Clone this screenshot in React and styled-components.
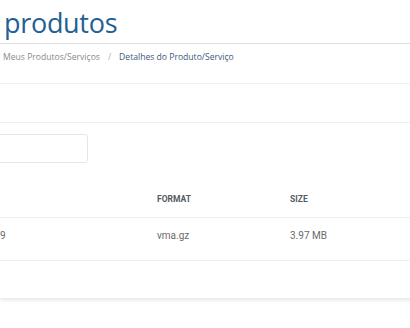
import React from "react";
import styled, { createGlobalStyle } from "styled-components";

const GlobalStyle = createGlobalStyle`
  html, body {
    margin: 0;
    padding: 0;
    background: #ffffff;
  }
  * {
    box-sizing: border-box;
  }
`;

const files = [{ name: "9", format: "vma.gz", size: "3.97 MB" }];

const App = () => {
  return (
    <>
      <GlobalStyle />
      <Page>
        <PageHeader>
          <Title>produtos</Title>
        </PageHeader>
        <Breadcrumb>
          <Crumb>Meus Produtos/Serviços</Crumb>
          <Separator>/</Separator>
          <Crumb active>Detalhes do Produto/Serviço</Crumb>
        </Breadcrumb>
        <Card>
          <CardHeader />
          <CardBody>
            <SearchInput type="text" />
            <Table>
              <thead>
                <tr>
                  <Th width="157px"></Th>
                  <Th width="133px">FORMAT</Th>
                  <Th>SIZE</Th>
                </tr>
              </thead>
              <tbody>
                {files.map((f) => (
                  <tr key={f.name}>
                    <Td>{f.name}</Td>
                    <Td>{f.format}</Td>
                    <Td>{f.size}</Td>
                  </tr>
                ))}
              </tbody>
            </Table>
          </CardBody>
        </Card>
      </Page>
    </>
  );
};

export default App;

const Page = styled.div`
  width: 410px;
  height: 328px;
  overflow: hidden;
  background: #ffffff;
`;

const PageHeader = styled.div`
  height: 44px;
  border-bottom: 1px solid #dedede;
  padding: 3px 0 0 4px;
`;

const Title = styled.h1`
  margin: 0;
  font-family: "Open Sans", sans-serif;
  font-weight: 400;
  font-size: 27px;
  line-height: 40px;
  color: #235f93;
  letter-spacing: -0.3px;
`;

const Breadcrumb = styled.div`
  display: flex;
  align-items: center;
  gap: 7px;
  height: 40px;
  padding: 0 0 14px 3px;
  border-bottom: 1px solid #f0f0f0;
  font-family: "Open Sans", sans-serif;
  font-size: 8.6px;
`;

const Crumb = styled.span`
  color: ${(p) => (p.active ? "#3c5b7c" : "#8a8a8a")};
`;

const Separator = styled.span`
  color: #b0b0b0;
  padding: 0 1px;
`;

const Card = styled.div`
  background: #ffffff;
  box-shadow: 0 2px 3px rgba(0, 0, 0, 0.07);
  border-bottom: 1px solid #ececec;
  width: 420px;
`;

const CardHeader = styled.div`
  height: 39px;
  border-bottom: 1px solid #efefef;
`;

const CardBody = styled.div`
  padding: 11px 0 37px 0;
`;

const SearchInput = styled.input`
  display: block;
  width: 100px;
  height: 29px;
  margin-left: -12px;
  border: 1px solid #e6e6e6;
  border-radius: 3px;
  background: #fff;
  outline: none;
`;

const Table = styled.table`
  width: 100%;
  margin-top: 25px;
  border-collapse: collapse;
  font-family: Roboto, sans-serif;
`;

const Th = styled.th`
  width: ${(p) => p.width || "auto"};
  text-align: left;
  height: 29px;
  padding: 6px 0 0 0;
  font-size: 8.5px;
  font-weight: 700;
  color: #555b61;
  border-bottom: 1px solid #eeeeee;
  vertical-align: top;
`;

const Td = styled.td`
  height: 43px;
  padding: 0 0 6px 0;
  font-size: 10px;
  color: #6b6b6b;
  border-bottom: 1px solid #efefef;
`;
